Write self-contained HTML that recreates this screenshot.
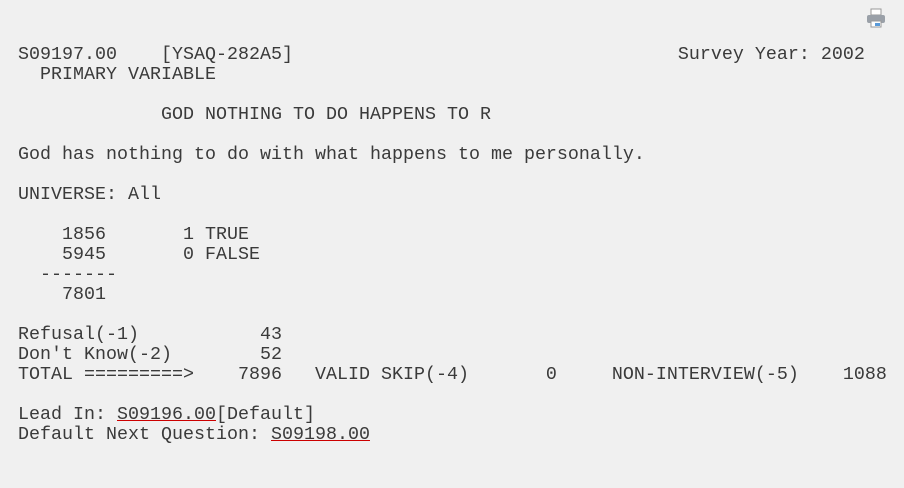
<!DOCTYPE html>
<html><head><style>
body{margin:0;background:#f0f0f0;width:904px;height:488px;overflow:hidden}
pre{position:absolute;left:18px;top:45px;margin:0;font-family:"Liberation Mono",monospace;font-size:18.33px;line-height:20px;color:#3a3a3a;letter-spacing:0}
a{color:#3a3a3a;text-decoration:underline;text-decoration-color:#c00}
.pr{position:absolute;left:866px;top:8px}
</style></head><body>
<svg class="pr" width="20" height="20" viewBox="0 0 20 20"><rect x="5" y="1" width="10" height="6" fill="#fff" stroke="#999"/><rect x="1" y="7" width="18" height="8" rx="2" fill="#9aa0a8"/><rect x="5" y="13" width="10" height="6" fill="#fff" stroke="#999"/><rect x="9" y="15" width="5" height="3" fill="#5a9ad8"/></svg>
<pre>S09197.00    [YSAQ-282A5]                                   Survey Year: 2002
  PRIMARY VARIABLE

             GOD NOTHING TO DO HAPPENS TO R

God has nothing to do with what happens to me personally.

UNIVERSE: All

    1856       1 TRUE
    5945       0 FALSE
  -------
    7801

Refusal(-1)           43
Don't Know(-2)        52
TOTAL =========>    7896   VALID SKIP(-4)       0     NON-INTERVIEW(-5)    1088

Lead In: <a>S09196.00</a>[Default]
Default Next Question: <a>S09198.00</a></pre>
</body></html>
